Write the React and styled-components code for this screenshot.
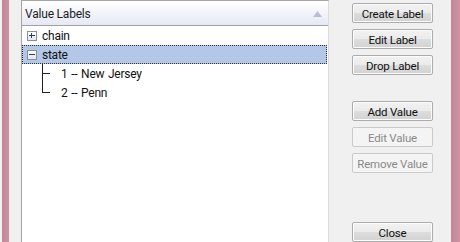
import React from "react";
import styled, { createGlobalStyle } from "styled-components";

const GlobalStyle = createGlobalStyle`
  html, body {
    margin: 0;
    padding: 0;
    background: #ffffff;
    overflow: hidden;
  }
  body {
    font-family: Roboto, "Noto Sans", sans-serif;
    font-size: 12px;
    color: #000;
    font-variant-ligatures: none;
  }
`;

const Screen = styled.div`
  width: 460px;
  height: 242px;
  display: flex;
  overflow: hidden;
`;

const Behind = styled.div`
  width: 2px;
  background: #f4f1f2;
`;

const Frame = styled.div`
  width: ${(p) => p.w}px;
  background: linear-gradient(to right, #c4869a, #cd93a3);
  flex-shrink: 0;
`;

const Dialog = styled.div`
  width: 442px;
  background: #f0f0f0;
  display: flex;
  padding-left: 12px;
  box-sizing: border-box;
  gap: 23px;
`;

const Tree = styled.div`
  width: 308px;
  height: 260px;
  background: #fff;
  border: 1px solid #a5a5a5;
  border-right-color: #dcdcdc;
  box-sizing: border-box;
  display: flex;
  flex-direction: column;
`;

const Header = styled.div`
  height: 25px;
  flex-shrink: 0;
  display: flex;
  align-items: center;
  justify-content: space-between;
  padding: 1px 6px 0 3px;
  box-sizing: border-box;
  background: linear-gradient(to bottom, #ffffff 0%, #f3f4fa 50%, #e6e8f4 100%);
  border-bottom: 1px solid #a0a0a8;
  color: #1e1e1e;
  font-size: 12px;
  letter-spacing: -0.2px;
`;

const SortArrow = styled.svg`
  width: 9px;
  height: 6px;
`;

const Row = styled.div`
  height: 19px;
  flex-shrink: 0;
  display: flex;
  align-items: center;
  padding-left: ${(p) => p.indent}px;
  margin-right: 1px;
  box-sizing: border-box;
  background: ${(p) => (p.selected ? "#b3c8e9" : "transparent")};
  outline: ${(p) => (p.selected ? "1px dotted #333" : "none")};
  outline-offset: -1px;
  white-space: pre;
  font-size: 12px;
  letter-spacing: -0.25px;
  word-spacing: 1px;
  color: #111;
`;

const Expander = styled.span`
  width: 10px;
  height: 10px;
  border: 1px solid #8a8f9c;
  box-sizing: border-box;
  background: linear-gradient(to bottom, #ffffff, #e4e6ee);
  margin-right: 5px;
  margin-top: 1px;
  position: relative;
  flex-shrink: 0;
  &::before {
    content: "";
    position: absolute;
    left: 1px;
    top: 3px;
    width: 6px;
    height: 1px;
    background: #2b3a66;
  }
  &::after {
    content: "";
    position: absolute;
    left: 3px;
    top: 1px;
    width: 1px;
    height: 5px;
    background: #2b3a66;
    display: ${(p) => (p.open ? "none" : "block")};
  }
`;

const Connector = styled.span`
  width: 19px;
  height: 19px;
  position: relative;
  flex-shrink: 0;
  &::before {
    content: "";
    position: absolute;
    left: 0;
    top: 0;
    width: 1px;
    height: ${(p) => (p.last ? "10px" : "19px")};
    background: #222;
  }
  &::after {
    content: "";
    position: absolute;
    left: 0;
    top: 9px;
    width: 8px;
    height: 1px;
    background: #222;
  }
`;

const Buttons = styled.div`
  width: 81px;
  display: flex;
  flex-direction: column;
  padding-top: 3px;
`;

const Button = styled.button`
  width: 81px;
  height: 20px;
  flex-shrink: 0;
  margin-bottom: 6px;
  margin-top: ${(p) => p.gap || 0}px;
  font-family: inherit;
  font-size: 11.5px;
  letter-spacing: -0.2px;
  line-height: 18px;
  padding: 1px 0 0;
  white-space: nowrap;
  border: 1px solid ${(p) => (p.disabled ? "#cacaca" : "#acacac")};
  background: ${(p) =>
    p.disabled
      ? "#f4f4f4"
      : "linear-gradient(to bottom, #f2f2f2 0%, #ebebeb 50%, #dddddd 51%, #d2d2d2 100%)"};
  color: ${(p) => (p.disabled ? "#8a8a8a" : "#111")};
  box-shadow: inset 0 0 0 1px ${(p) => (p.disabled ? "#f4f4f4" : "#fcfcfc")};
  border-radius: 2px;
`;

export default function App() {
  return (
    <>
      <GlobalStyle />
      <Screen>
        <Behind />
        <Frame w={7} />
        <Dialog>
          <Tree>
            <Header>
              <span>Value Labels</span>
              <SortArrow viewBox="0 0 9 6">
                <path d="M0 6 L4.5 0 L9 6 Z" fill="#b9bfd0" />
              </SortArrow>
            </Header>
            <Row indent={5}>
              <Expander />
              chain
            </Row>
            <Row indent={5} selected>
              <Expander open />
              state
            </Row>
            <Row indent={20}>
              <Connector />1 -- New Jersey
            </Row>
            <Row indent={20}>
              <Connector last />2 -- Penn
            </Row>
          </Tree>
          <Buttons>
            <Button>Create Label</Button>
            <Button>Edit Label</Button>
            <Button>Drop Label</Button>
            <Button gap={20}>Add Value</Button>
            <Button disabled>Edit Value</Button>
            <Button disabled>Remove Value</Button>
            <Button gap={43}>Close</Button>
          </Buttons>
        </Dialog>
        <Frame w={9} />
      </Screen>
    </>
  );
}
